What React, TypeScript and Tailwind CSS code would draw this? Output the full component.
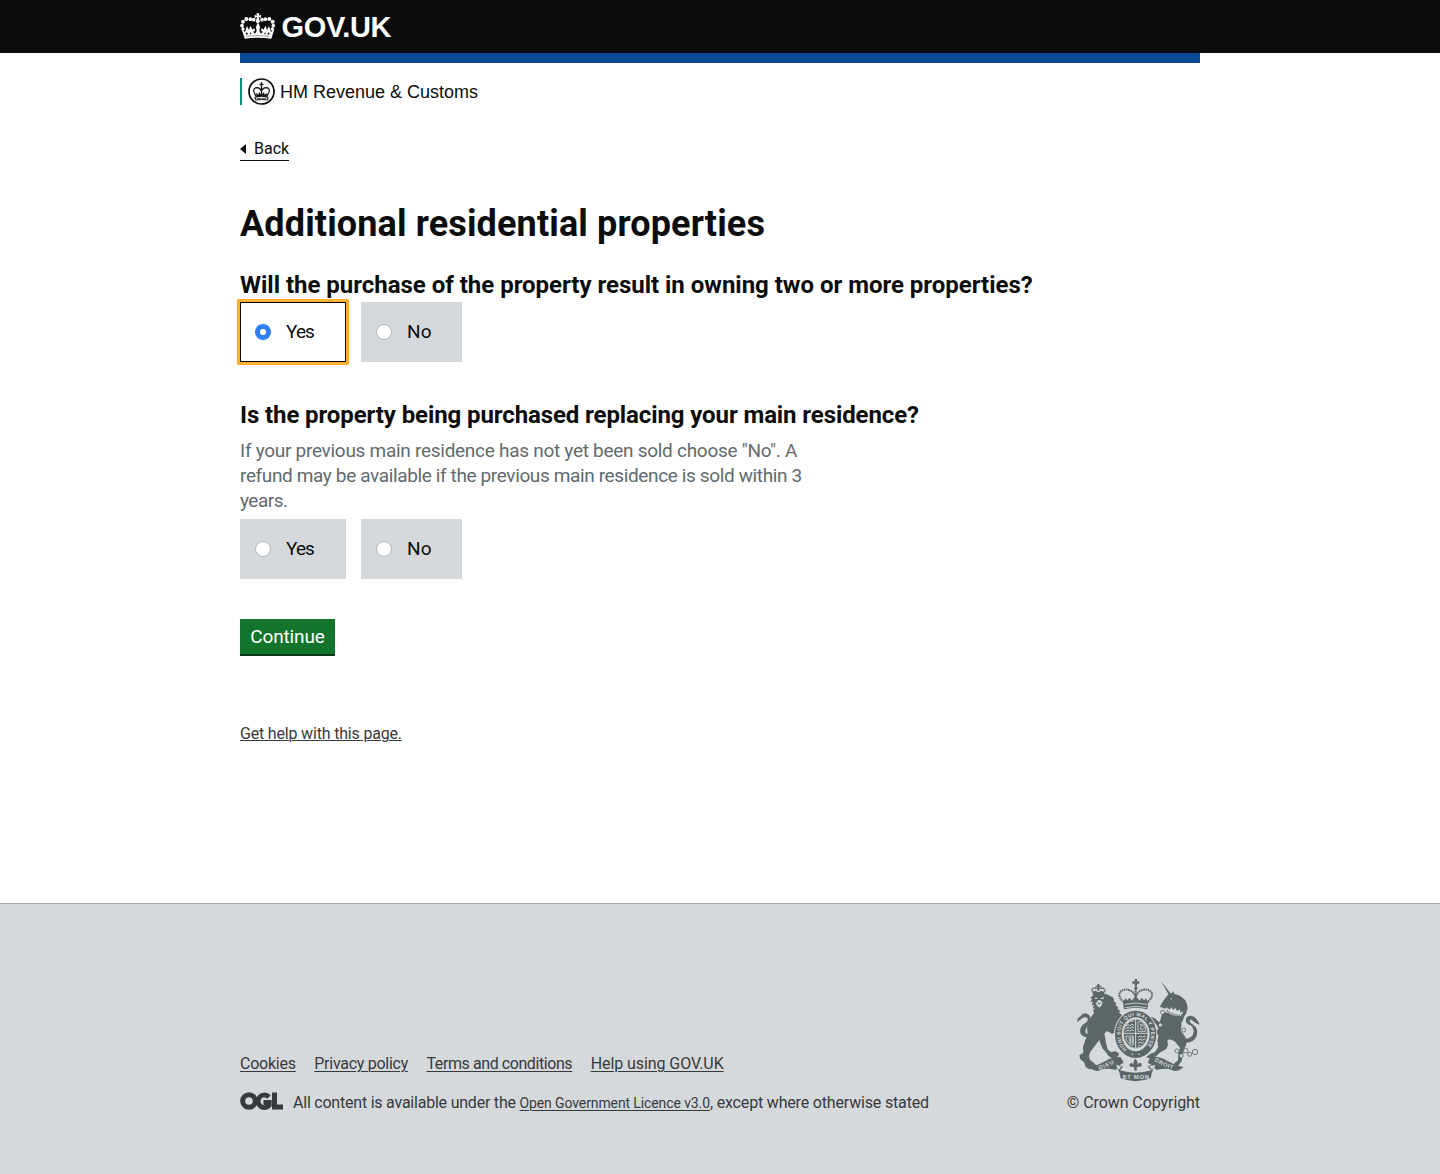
import type { ReactNode } from "react";

function GovCrown() {
  return (
    <svg className="h-[27px] w-[35px]" viewBox="30 38 105 81" fill="#fff">
      <path d="M79 39h9l-2 7 7-3v10l-7-3 2 9h-9l2-9-7 3V43l7 3z" />
      <circle cx="83.500" cy="63" r="6" />
      <circle cx="71" cy="58" r="5.500" />
      <circle cx="61" cy="56.500" r="5.500" />
      <circle cx="49" cy="56" r="6" />
      <circle cx="39" cy="64" r="6" />
      <circle cx="36" cy="76" r="5.500" />
      <circle cx="39" cy="86" r="5" />
      <circle cx="96" cy="58" r="5.500" />
      <circle cx="106" cy="56.500" r="5.500" />
      <circle cx="118" cy="56" r="6" />
      <circle cx="128" cy="64" r="6" />
      <circle cx="130" cy="76" r="5.500" />
      <circle cx="127" cy="86" r="5" />
      <path d="M44 115L35 87l10 8 6-18 6 12 4-13 7 12 5-5 2 9-6 2 6 6 5-8-2-13 6-13 6 13-2 13 5 8 6-6-6-2 2-9 5 5 7-12 4 13 6-12 6 18 10-8-9 28q-40-6-79 0z" />
      <path d="M47 98l4-2 3 6-5 1zM60 96l5 3-4 4zM107 96l-5 3 4 4zM119 98l-4-2-3 6 5 1z" fill="#0b0c0c" />
      <path d="M48 108q35-5 70 0" fill="none" stroke="#0b0c0c" strokeWidth="1.200" />
    </svg>
  );
}

function RevenueCrest() {
  return (
    <svg className="ml-1.5 h-[27px] w-[27px]" viewBox="52.500 24 81 81" fill="none" stroke="#0b0c0c">
      <circle cx="93" cy="64.500" r="37.500" strokeWidth="5" />
      <path d="M93 37v17M87 43h12" strokeWidth="4" />
      <path d="M77 80L70 65q-2-11 8-12 12 0 15 12 3-12 15-12 10 1 8 12l-7 15M93 54v23" strokeWidth="3.500" />
      <path d="M77 70l7 5 2-8 7 9 7-9 2 8 7-5-1 10q-15-4-30 0z" fill="#0b0c0c" strokeWidth="1" />
      <path d="M73 82q20-7 40 0l-2 8q-18-3-36 0z" strokeWidth="3" />
      <path d="M79 86q14-3 28 0" strokeWidth="2" />
    </svg>
  );
}

function RoyalArms() {
  return (
    <svg className="h-[105px] w-[126px]" viewBox="42 21 378 315" fill="#5c6667" textRendering="geometricPrecision">
      {/* central crown */}
      <g>
        <path d="M224 27h7v7h7v7h-7v9h-7v-9h-7v-7h7z" />
        <circle cx="227.500" cy="55" r="5" />
        <path d="M227 61v30M192 96q-18-14-13-27 10-16 31-8 14 6 17 22 3-16 17-22 21-8 31 8 5 13-13 27" fill="none" stroke="#5c6667" strokeWidth="6" strokeDasharray="5 1.800" />
        <path d="M189 98l7-13 6 6 7-8 6 9 6-7 6-6 6 6 6 7 6-9 7 8 6-6 7 13-3 20q-35-10-70 0z" />
        <path d="M194 103q34-8 68 0M196 113q32-8 64 0" fill="none" stroke="#d5d9dc" strokeWidth="2.500" />
      </g>
      {/* lion */}
      <g>
        <path d="M112 42h6v5h5v5h-5v5h-6v-5h-5v-5h5z" />
        <path d="M102 69q-10-9-3-14 9-4 16 5 8-9 17-4 6 5-3 13" fill="none" stroke="#5c6667" strokeWidth="5" strokeDasharray="4 1.500" />
        <path d="M98 66l8-4 9 5 9-5 9 5-2 9-31 1z" />
        <path d="M98 78l10-5 14 1 13-3 10 4 12 6 6 8-2 4 9 8-4 3 9 9-3 3 9 7-4 5 9 7-5 8q-8 9-10 24l2 22-11-1-6 4-10-7-8-1-5 8 3 13 2 14 5 19 9 8 14-2 11 6-2 8-9 5-12 1-9-7-7-10-10-11-7-17-3-9-11 14-16 22-4 11 3 13 13 10 8 9-6 7-17 2-11-7-5-15-11-8-3-12 12-8-1-16 6-20 8-18-2-22 8-24 13-19-3-7 7-9-8 3 4-12-7 2 4-11-8 1 6-10-6-1 8-9-3-6z" />
        <path d="M104 83h9l-2 4h-6zM122 84l11-3-3 5-7 2zM113 91l8-1 7 9-4 8-6 6-6-6-6-7 4-2z" fill="#d5d9dc" />
        <path d="M112 97l7 3 6-3-5 6h-5z" />
        <path d="M96 202q-30 3-35-14-3-18 14-28 12-8 7-16-6-5-15 1-8 6-16 12 1-13 9-17 11-15 23-8 14 8 5 26-12 17-12 27 2 10 20 8z" />
      </g>
      {/* unicorn */}
      <g>
        <path d="M303 34l31 39-6 4z" />
        <path d="M310 92l14-18 11-4 5-6 3 8 14 4 9 6 10 9 5 12 2 13-3 6v6l-7 10-6 18-37-8-8-28-1-8-8 4-8-4-6-1z" />
        <path d="M331 86l6-2-3 5z" fill="#d5d9dc" />
        <path d="M322 113l8 6 3-8 7 9 6-7 5 10 8-5 3 10 7-4-3 13q-28 4-46-12z" fill="#d5d9dc" />
        <path d="M321 121q17 17 46 14" fill="none" stroke="#5c6667" strokeWidth="4" strokeDasharray="4 2.500" />
        <path d="M308 126l16 2 14 14 24 4 3 17-3 19 13 17 6 18-7 18-5 18-4 20-11 15-13 2 2-10 11-9 1-20 5-18-17-20-15-5-6 4 2 12-5 13-18 10-13 12-18 6-12-3 12-10 15-6 10-16-3-18 4-17-13-2-10-9-8-12 9 1 11 9 11-5-8-15-13-11h-15l-3-8 15-3 13 5 8 8 6 3z" />
        <path d="M369 207q32 0 32-24-2-16-14-19-15-7-7-22 8-9 22-2 11 7 17 24-14-4-21-12-7-6-9 1 1 7 12 13 15 10 9 31-8 23-38 21z" />
        <g fill="#d5d9dc" stroke="#5c6667" strokeWidth="2.500">
          <circle cx="308" cy="127" r="6" />
          <circle cx="301" cy="165" r="6" />
          <circle cx="371" cy="180" r="6" />
          <circle cx="351" cy="243" r="6" />
          <circle cx="364" cy="257" r="6" />
          <circle cx="377" cy="242" r="7" />
          <circle cx="389" cy="253" r="6" />
          <circle cx="405" cy="246" r="8" />
        </g>
      </g>
      {/* garter and shield */}
      <ellipse cx="227" cy="193" rx="65" ry="74" fill="#d5d9dc" />
      <ellipse cx="227" cy="193" rx="52" ry="61" fill="none" stroke="#5c6667" strokeWidth="20" />
      <path id="garter" d="M201 238A46 55 0 1 1 253 238" fill="none" />
      <text fill="#d5d9dc" fontFamily="Liberation Sans" fontSize="15.500" fontWeight="700">
        <textPath href="#garter" textLength="248">HONI SOIT QUI MAL Y PENSE</textPath>
      </text>
      <ellipse cx="227" cy="191" rx="37" ry="44" stroke="#d5d9dc" strokeWidth="2" />
      <path d="M227 147v88M190 190h74" stroke="#d5d9dc" strokeWidth="3" />
      <path d="M201 160q9-8 21-8M196 168l8-4 5 4 6-5 7 3M196 176l8-4 5 4 6-5 7 3M196 184l8-4 5 4 6-5 7 3M234 202l7-4 6 4 6-4 5 3M234 211l7-4 6 4 6-4 4 3M234 220l7-4 6 4 4-4M234 229l7-4" fill="none" stroke="#d5d9dc" strokeWidth="3" />
      <path d="M234 155h11l12 14v15h-23zM240 177l4-9-3-6 8 4 5 7-5 5zM197 198h23v27l-8 1-12-15zM206 201l6 20M212 200v22M217 200v20" fill="none" stroke="#d5d9dc" strokeWidth="2.500" />
      <circle cx="217" cy="253" r="2.500" fill="#d5d9dc" />
      <circle cx="237" cy="253" r="2.500" fill="#d5d9dc" />
      {/* motto ribbon */}
      <path d="M88 292q27-7 50-20 22-13 44-11l9 17-16 9-8 13q-31-8-45 0-17 8-34-8zM371 292q-27-7-50-20-25-14-50-12l-8 18 17 9 9 13q31-8 46 0 17 8 36-8z" />
      <path d="M164 281q16 2 25 9l-9 11q46 14 94 0l-11-11q7-6 26-9l-13 26-4 18q-46 17-90 0l-4-18z" />
      <path d="M167 284l17 5-8 11zM287 284l-19 5 9 11z" fill="#d5d9dc" />
      <path id="mottoLeft" d="M118 299Q145 292 170 275" fill="none" />
      <path id="mottoRight" d="M283 273Q310 291 344 299" fill="none" />
      <g fill="#d5d9dc" fontFamily="Liberation Sans" fontSize="17" fontWeight="700">
        <text><textPath href="#mottoLeft" textLength="49">DIEU</textPath></text>
        <text><textPath href="#mottoRight" textLength="60">DROIT</textPath></text>
        <text x="188" y="326" fontSize="18" textLength="79">ET MON</text>
      </g>
      {/* lily */}
      <path d="M226 267q-8 9-3 17-13-10-14 2 2 6 8 3 3 3 7 2l-1 10h7l-1-10q5 1 7-2 7 3 9-4-2-11-14-1 4-8-5-17z" stroke="#5c6667" strokeWidth="1.500" />
    </svg>
  );
}

function OglLogo() {
  return (
    <svg className="h-[18px] w-[43px]" viewBox="0 0 43 18" fill="none" stroke="#373a3c" strokeWidth="5">
      <circle cx="9" cy="9" r="6.300" />
      <path d="M29 5A6.300 6.300 0 1 0 29.300 13.200V10.500H23.500" strokeWidth="4.800" />
      <path d="M34.500 .6V14.900H43" strokeWidth="5" />
    </svg>
  );
}

function RadioCard({ label, name, selected = false, width }: { label: string; name: string; selected?: boolean; width: string }) {
  return (
    <label
      className={`flex h-[60px] items-center ${width} ${
        selected ? "border border-[#0b0c0c] bg-white pl-[14px] outline-3 outline-[#fdb02f]" : "bg-[#d5d9dc] pl-[15px]"
      }`}
    >
      <input type="radio" name={name} defaultChecked={selected} className="sr-only" />
      <span
        className={`flex size-4 items-center justify-center rounded-full ${
          selected ? "bg-[#2f7ff7]" : "border border-[#b5b7b8] bg-white"
        }`}
      >
        {selected && <span className="size-[6px] rounded-full bg-white" />}
      </span>
      <span className={`ml-[15px] pb-px text-[19px] leading-[25px] ${label === "Yes" ? "tracking-[-0.9px]" : "tracking-[0.3px]"}`}>{label}</span>
    </label>
  );
}

function FooterLink({ children, className }: { children: ReactNode; className: string }) {
  return (
    <a href="#" className={`underline decoration-1 underline-offset-2 ${className}`}>
      {children}
    </a>
  );
}

export default function App() {
  return (
    <div className="flex h-[1174px] flex-col bg-white font-['Roboto',sans-serif] text-[#0b0c0c]">
      <header className="h-[53px] bg-[#0b0c0c]">
        <div className="mx-auto flex h-full w-[960px] items-center">
          <a href="#" className="flex items-center gap-[6.500px] text-white">
            <GovCrown />
            <span className="font-['Liberation_Sans',sans-serif] text-[29px] leading-[30px] font-bold tracking-[-0.35px]">GOV.UK</span>
          </a>
        </div>
      </header>

      <main className="mx-auto w-[960px] flex-1">
        <div className="h-[10px] bg-[#084a95]" />
        <div className="mt-[15px] flex h-[27px] items-center border-l-2 border-[#008f84]">
          <RevenueCrest />
          <span className="ml-[5px] pt-0.5 font-['Liberation_Sans',sans-serif] text-[18px] leading-[27px]">HM Revenue &amp; Customs</span>
        </div>

        <a href="#" className="mt-[33px] flex h-[23px] w-[49px] items-start border-b border-[#0b0c0c] pt-px text-base leading-5">
          <span className="mt-[5px] mr-2 h-0 w-0 border-y-[5px] border-r-[6px] border-y-transparent border-r-[#0b0c0c]" />
          Back
        </a>

        <h1 className="mt-[43px] text-[36px] leading-[40px] font-bold tracking-[0.14px] whitespace-nowrap">Additional residential properties</h1>

        <h2 className="mt-[26px] text-[24px] leading-[30px] font-bold tracking-[-0.02px]">
          Will the purchase of the property result in owning two or more properties?
        </h2>
        <div className="mt-[2px] flex gap-[15px]">
          <RadioCard label="Yes" name="owning" selected width="w-[106px]" />
          <RadioCard label="No" name="owning" width="w-[101px]" />
        </div>

        <h2 className="mt-[38px] text-[24px] leading-[30px] font-bold tracking-[-0.1px]">
          Is the property being purchased replacing your main residence?
        </h2>
        <p className="mt-[8px] text-[19px] leading-[25px] text-[#626a6e]">
          <span className="block tracking-[-0.28px]">If your previous main residence has not yet been sold choose "No". A</span>
          <span className="block tracking-[-0.37px]">refund may be available if the previous main residence is sold within 3</span>
          <span className="block tracking-[-0.5px]">years.</span>
        </p>
        <div className="mt-[6px] flex gap-[15px]">
          <RadioCard label="Yes" name="replacing" width="w-[106px]" />
          <RadioCard label="No" name="replacing" width="w-[101px]" />
        </div>

        <button className="mt-[40px] flex h-[37px] w-[95px] justify-center border-b-2 border-[#0a3317] bg-[#12752b] text-[19px] leading-[35px] tracking-[-0.12px] text-white">
          Continue
        </button>

        <a href="#" className="mt-[68px] block w-fit text-base leading-5 tracking-[-0.18px] text-[#373a3c] underline decoration-1 underline-offset-1">
          Get help with this page.
        </a>
      </main>

      <footer className="h-[271px] border-t border-[#a1acb2] bg-[#d5d9dc] text-base leading-5 text-[#373a3c]">
        <div className="mx-auto flex w-[960px] justify-between pt-[73px]">
          <div className="pt-[77px]">
            <nav className="flex gap-[18.500px] whitespace-nowrap">
              <FooterLink className="tracking-[-0.23px]">Cookies</FooterLink>
              <FooterLink className="tracking-[-0.27px]">Privacy policy</FooterLink>
              <FooterLink className="tracking-[-0.42px]">Terms and conditions</FooterLink>
              <FooterLink className="tracking-[-0.08px]">Help using GOV.UK</FooterLink>
            </nav>
            <div className="mt-[18px] flex items-start">
              <OglLogo />
              <p className="mt-px ml-[10px] whitespace-nowrap">
                <span className="tracking-[-0.22px]">All content is available under the </span>
                <FooterLink className="text-sm leading-5 tracking-[-0.11px]">Open Government Licence v3.0</FooterLink>
                <span className="tracking-[-0.17px]">, except where otherwise stated</span>
              </p>
            </div>
          </div>
          <div className="flex flex-col items-end">
            <RoyalArms />
            <span className="mt-[11px] tracking-[-0.08px]">© Crown Copyright</span>
          </div>
        </div>
      </footer>
    </div>
  );
}
